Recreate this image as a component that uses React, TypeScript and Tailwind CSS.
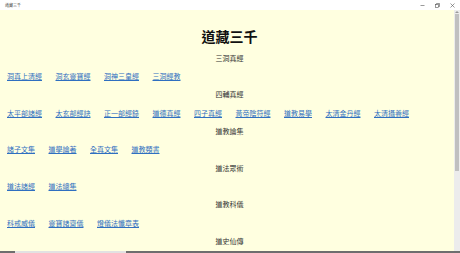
const sections: { title: string; links: string[] }[] = [
  { title: "三洞真經", links: ["洞真上清經", "洞玄靈寶經", "洞神三皇經", "三洞經教"] },
  {
    title: "四輔真經",
    links: ["太平部諸經", "太玄部經訣", "正一部經錄", "道德真經", "四子真經", "黃帝陰符經", "道教易學", "太清金丹經", "太清攝養經"],
  },
  { title: "道教論集", links: ["諸子文集", "道學論著", "全真文集", "道教類書"] },
  { title: "道法眾術", links: ["道法諸經", "道法總集"] },
  { title: "道教科儀", links: ["科戒威儀", "靈寶諸齋儀", "燈儀法懺章表"] },
  { title: "道史仙傳", links: [] },
]

const font = { fontFamily: '"Noto Sans CJK TC", "Noto Sans CJK SC", sans-serif' }

function TitleBar() {
  return (
    <div className="flex h-[10px] items-center justify-between bg-white pl-[5px] pr-[5px]">
      <span className="text-[4px] leading-[4px] text-[#444]">道藏三千</span>
      <div className="flex items-center gap-[10px]">
        <svg width="5" height="5" viewBox="0 0 10 10">
          <line x1="1" y1="5" x2="9" y2="5" stroke="#555" strokeWidth="1.2" />
        </svg>
        <svg width="5" height="5" viewBox="0 0 10 10" fill="none" stroke="#555" strokeWidth="1.2">
          <rect x="1" y="3" width="6" height="6" />
          <path d="M3 3V1h6v6H7" />
        </svg>
        <svg width="5" height="5" viewBox="0 0 10 10" stroke="#555" strokeWidth="1.2">
          <line x1="1" y1="1" x2="9" y2="9" />
          <line x1="9" y1="1" x2="1" y2="9" />
        </svg>
      </div>
    </div>
  )
}

export default function App() {
  return (
    <div className="flex h-[253px] w-[460px] flex-col overflow-hidden bg-[#ffffe0]" style={font}>
      <TitleBar />
      <div className="flex h-[241px]">
        <div className="flex-1 pl-[7px] pr-[2px] pt-[19px]">
          <h1 className="text-center text-[14px] font-bold leading-[14px] text-[#111]">道藏三千</h1>
          <div className="mt-[5.8px]">
            {sections.map((s) => (
              <div key={s.title}>
                <div className="flex h-[18.33px] items-center justify-center text-[7px] text-[#333]">{s.title}</div>
                {s.links.length > 0 && (
                  <div className="flex h-[18.33px] items-center gap-[13.5px] text-[7px]">
                    {s.links.map((l) => (
                      <a key={l} href="#" className="text-[#2f6fc0] underline">
                        {l}
                      </a>
                    ))}
                  </div>
                )}
              </div>
            ))}
          </div>
        </div>
        <div className="flex w-[6px] flex-col items-center bg-[#ececec] pt-[1px]">
          <svg width="4" height="2" viewBox="0 0 4 2">
            <path d="M0 2L2 0L4 2Z" fill="#999" />
          </svg>
          <div className="mt-[1px] h-[157px] w-[4px] bg-[#c0c0c0]" />
        </div>
      </div>
      <div className="flex h-[2px] bg-[#6e6e6e]">
        <div className="ml-[15px] w-[111px] bg-[#e2e2e2]" />
      </div>
    </div>
  )
}
